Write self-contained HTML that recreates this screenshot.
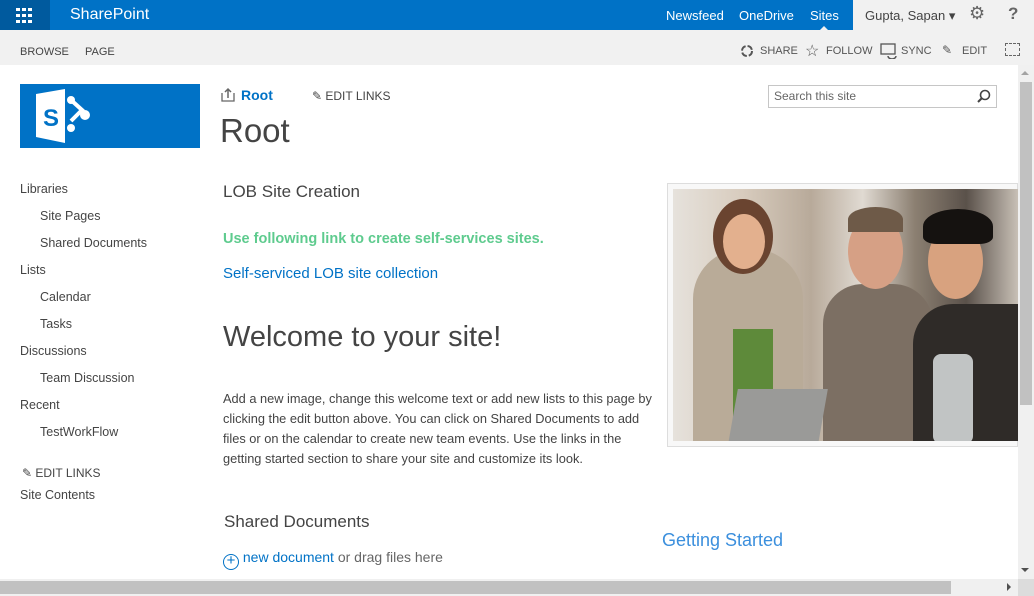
<!DOCTYPE html>
<html><head><meta charset="utf-8"><style>
*{margin:0;padding:0;box-sizing:border-box}
body{width:1034px;height:596px;overflow:hidden;position:relative;font-family:"Segoe UI","Liberation Sans",sans-serif;background:#fff;color:#444}
.a{position:absolute;white-space:nowrap}
.top{left:0;top:0;width:1034px;height:30px;background:#0072c6}
.ribbon{left:0;top:30px;width:1034px;height:35px;background:#f1f1f1}
.nav{font-size:12.5px}
.blue{color:#0072c6}
</style></head><body>
<div class="a top"></div>
<div class="a" style="left:0;top:0;width:50px;height:30px;background:#005a9e"></div>
<svg class="a" style="left:16px;top:8px" width="17" height="15"><g fill="#fff">
<rect x="0" y="0" width="4" height="3"/><rect x="6" y="0" width="4" height="3"/><rect x="12" y="0" width="4" height="3"/>
<rect x="0" y="6" width="4" height="3"/><rect x="6" y="6" width="4" height="3"/><rect x="12" y="6" width="4" height="3"/>
<rect x="0" y="12" width="4" height="3"/><rect x="6" y="12" width="4" height="3"/><rect x="12" y="12" width="4" height="3"/></g></svg>
<div class="a" style="left:70px;top:6px;font-size:16px;color:#fff">SharePoint</div>
<div class="a" style="left:666px;top:8px;font-size:13px;color:#fff">Newsfeed</div>
<div class="a" style="left:739px;top:8px;font-size:13px;color:#fff">OneDrive</div>
<div class="a" style="left:810px;top:8px;font-size:13px;color:#fff">Sites</div>
<div class="a" style="left:820px;top:26px;width:0;height:0;border-left:4px solid transparent;border-right:4px solid transparent;border-bottom:4px solid #f1f1f1"></div>
<div class="a" style="left:853px;top:0;width:181px;height:30px;background:#f1f1f1"></div>
<div class="a" style="left:865px;top:8px;font-size:13px;color:#444">Gupta, Sapan ▾</div>
<div class="a" style="left:969px;top:3px;font-size:18px;color:#666">⚙</div>
<div class="a" style="left:1008px;top:4px;font-size:17px;font-weight:bold;color:#666">?</div>
<div class="a ribbon"></div>
<div class="a" style="left:20px;top:46px;font-size:11px;color:#444">BROWSE</div>
<div class="a" style="left:85px;top:46px;font-size:11px;color:#444">PAGE</div>
<svg class="a" style="left:740px;top:44px" width="14" height="14"><circle cx="7" cy="7" r="5" stroke="#555" stroke-width="2" fill="none" stroke-dasharray="6 2"/></svg>
<div class="a" style="left:760px;top:45px;font-size:11px;color:#555">SHARE</div>
<div class="a" style="left:805px;top:41px;font-size:16px;color:#555">☆</div>
<div class="a" style="left:826px;top:45px;font-size:11px;color:#555">FOLLOW</div>
<svg class="a" style="left:880px;top:43px" width="17" height="16"><rect x="1" y="1" width="14" height="10" stroke="#555" fill="none" stroke-width="1.3"/><path d="M8 13 a4 3 0 0 0 8 0" stroke="#555" fill="none" stroke-width="1.5"/></svg>
<div class="a" style="left:901px;top:45px;font-size:11px;color:#555">SYNC</div>
<div class="a" style="left:942px;top:43px;font-size:12px;color:#555">✎</div>
<div class="a" style="left:962px;top:45px;font-size:11px;color:#555">EDIT</div>
<div class="a" style="left:1005px;top:43px;width:15px;height:13px;border:1px dashed #666"></div>
<!-- logo -->
<div class="a" style="left:20px;top:84px;width:180px;height:64px;background:#0072c6"></div>
<svg class="a" style="left:35px;top:88px" width="60" height="56"><path d="M1 6 L30 1 V55 L1 49Z" fill="#fff"/><text x="8" y="38" font-family="Liberation Sans" font-weight="bold" font-size="24" fill="#0072c6">S</text><g stroke="#fff" stroke-width="4" fill="none"><path d="M36 12 L47 22 L36 33"/></g><circle cx="36" cy="12" r="4" fill="#fff"/><circle cx="50" cy="27" r="5" fill="#fff"/><circle cx="36" cy="40" r="4" fill="#fff"/></svg>
<svg class="a" style="left:221px;top:87px" width="14" height="16"><path d="M1 6 V14 H13 V6" stroke="#666" fill="none" stroke-width="1.3"/><path d="M7 11 V2 M4 5 L7 2 L10 5" stroke="#666" fill="none" stroke-width="1.5"/></svg>
<div class="a blue" style="left:241px;top:87px;font-size:14px;font-weight:bold">Root</div>
<div class="a" style="left:312px;top:89px;font-size:12px;color:#444">✎ EDIT LINKS</div>
<div class="a" style="left:220px;top:112px;font-size:33px;font-weight:300;color:#444">Root</div>
<div class="a" style="left:768px;top:85px;width:229px;height:23px;border:1px solid #c6c6c6"></div>
<div class="a" style="left:774px;top:89px;font-size:12px;color:#666">Search this site</div>
<svg class="a" style="left:977px;top:89px" width="14" height="14"><circle cx="8" cy="6" r="4.5" stroke="#444" stroke-width="1.6" fill="none"/><path d="M5 9 L1 13" stroke="#444" stroke-width="2"/></svg>
<!-- left nav -->
<div class="a nav" style="left:20px;top:182px">Libraries</div>
<div class="a nav" style="left:40px;top:209px">Site Pages</div>
<div class="a nav" style="left:40px;top:236px">Shared Documents</div>
<div class="a nav" style="left:20px;top:263px">Lists</div>
<div class="a nav" style="left:40px;top:290px">Calendar</div>
<div class="a nav" style="left:40px;top:317px">Tasks</div>
<div class="a nav" style="left:20px;top:344px">Discussions</div>
<div class="a nav" style="left:40px;top:371px">Team Discussion</div>
<div class="a nav" style="left:20px;top:398px">Recent</div>
<div class="a nav" style="left:40px;top:425px">TestWorkFlow</div>
<div class="a" style="left:22px;top:466px;font-size:12px">✎ EDIT LINKS</div>
<div class="a nav" style="left:20px;top:488px">Site Contents</div>
<!-- main -->
<div class="a" style="left:223px;top:182px;font-size:17px;color:#444">LOB Site Creation</div>
<div class="a" style="left:223px;top:231px;font-size:14.5px;font-weight:bold;color:#5ecb8e">Use following link to create self-services sites.</div>
<div class="a blue" style="left:223px;top:265px;font-size:15px">Self-serviced LOB site collection</div>
<div class="a" style="left:223px;top:321px;font-size:29px;font-weight:300;color:#444">Welcome to your site!</div>
<div class="a" style="left:223px;top:389px;font-size:12.8px;line-height:20px;color:#444;white-space:normal;width:432px">Add a new image, change this welcome text or add new lists to this page by clicking the edit button above. You can click on Shared Documents to add files or on the calendar to create new team events. Use the links in the getting started section to share your site and customize its look.</div>
<div class="a" style="left:224px;top:512px;font-size:17px;color:#444">Shared Documents</div>
<div class="a" style="left:223px;top:549px;font-size:14px;color:#666"><span class="blue" style="display:inline-block;width:16px;height:16px;border:1.5px solid #0072c6;border-radius:50%;text-align:center;line-height:12px;font-size:15px;vertical-align:-3px">+</span> <span class="blue">new document</span> or drag files here</div>
<div class="a" style="left:662px;top:530px;font-size:18px;color:#3b8fdd">Getting Started</div>
<!-- photo -->
<div class="a" style="left:667px;top:183px;width:351px;height:264px;border:1px solid #ddd;background:#f8f8f8"></div>
<div class="a" style="left:673px;top:189px;width:345px;height:252px;background:linear-gradient(90deg,#e6e2dc 0%,#d8ccbe 20%,#b8aa9a 40%,#e0dad2 55%,#8c8072 70%,#5a514a 85%,#c8c0b6 100%);overflow:hidden">
<div class="a" style="left:20px;top:60px;width:110px;height:200px;border-radius:50px 50px 0 0;background:#b9ab98"></div>
<div class="a" style="left:40px;top:10px;width:60px;height:75px;border-radius:50%;background:#6a4430"></div>
<div class="a" style="left:50px;top:25px;width:42px;height:55px;border-radius:50%;background:#e3b08e"></div>
<div class="a" style="left:60px;top:140px;width:40px;height:100px;background:#5e8a3a"></div>
<div class="a" style="left:150px;top:95px;width:110px;height:170px;border-radius:40px 40px 0 0;background:#7c6f63"></div>
<div class="a" style="left:175px;top:25px;width:55px;height:75px;border-radius:50%;background:#d6a085"></div>
<div class="a" style="left:175px;top:18px;width:55px;height:25px;border-radius:50% 50% 0 0;background:#6e5a48"></div>
<div class="a" style="left:240px;top:115px;width:110px;height:150px;border-radius:40px 0 0 0;background:#2f2b28"></div>
<div class="a" style="left:255px;top:35px;width:55px;height:75px;border-radius:50%;background:#d8a27f"></div>
<div class="a" style="left:250px;top:20px;width:70px;height:35px;border-radius:50% 50% 20% 20%;background:#151210"></div>
<div class="a" style="left:60px;top:200px;width:90px;height:55px;background:#9a9a98;transform:skewX(-10deg)"></div>
<div class="a" style="left:260px;top:165px;width:40px;height:90px;border-radius:8px;background:rgba(230,235,235,.8)"></div>
</div>
<!-- scrollbars -->
<div class="a" style="left:1018px;top:65px;width:16px;height:515px;background:#f0f0f0"></div>
<div class="a" style="left:1020px;top:82px;width:12px;height:323px;background:#c1c1c1"></div>
<div class="a" style="left:1021px;top:71px;width:0;height:0;border-left:4px solid transparent;border-right:4px solid transparent;border-bottom:4px solid #a3a3a3"></div>
<div class="a" style="left:1021px;top:568px;width:0;height:0;border-left:4px solid transparent;border-right:4px solid transparent;border-top:4px solid #505050"></div>
<div class="a" style="left:0;top:579px;width:1034px;height:17px;background:#f0f0f0"></div>
<div class="a" style="left:0;top:581px;width:951px;height:13px;background:#c1c1c1"></div>
<div class="a" style="left:1007px;top:583px;width:0;height:0;border-top:4px solid transparent;border-bottom:4px solid transparent;border-left:4px solid #505050"></div>
<div class="a" style="left:1018px;top:579px;width:16px;height:17px;background:#dcdcdc"></div>
</body></html>
